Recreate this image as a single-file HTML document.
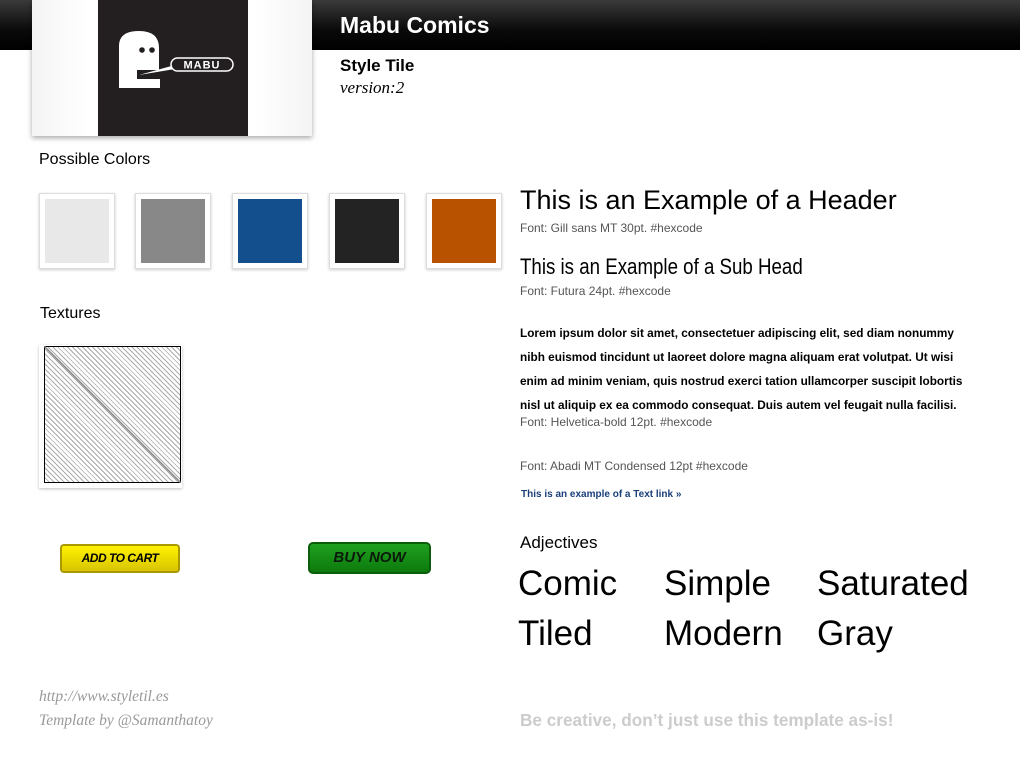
<!DOCTYPE html>
<html><head><style>
*{margin:0;padding:0;box-sizing:border-box}
body{width:1020px;height:760px;background:#fff;position:relative;overflow:hidden;font-family:"Liberation Sans",sans-serif;color:#000}
.a{position:absolute}
.bar{left:0;top:0;width:1020px;height:50px;background:linear-gradient(#3a3a3a,#0a0a0a 60%,#000)}
.card{left:32px;top:0;width:280px;height:136px;background:linear-gradient(90deg,#f4f4f4,#fff 20%,#fff 80%,#f4f4f4);box-shadow:0 2px 5px rgba(0,0,0,.35)}
.dark{left:98px;top:0;width:150px;height:136px;background:#231f20}
.sw{width:76px;height:76px;background:#fff;border:1px solid #ddd;box-shadow:0 1px 3px rgba(0,0,0,.2);top:193px}
.sw div{position:absolute;left:5px;top:5px;width:64px;height:64px}
.small{font-size:12px;color:#555}
.adj{font-size:35px}
</style></head><body>
<div class="a bar"></div>
<div class="a card"></div>
<div class="a dark"></div>
<svg class="a" style="left:117px;top:30px" width="118" height="60" viewBox="0 0 118 60">
<path d="M2 58 V16 Q2 1 22 1 Q42 1 42 18 V40 H20 V49 H43 V58 Z" fill="#fff"/>
<circle cx="25" cy="20" r="2.8" fill="#231f20"/><circle cx="35" cy="20" r="2.8" fill="#231f20"/>
<path d="M22 45 L58 35 L58 39 Z" fill="#fff"/>
<rect x="54" y="28" width="62" height="13" rx="6.5" fill="#231f20" stroke="#fff" stroke-width="1.5"/>
<text x="85" y="38.5" font-size="11" font-weight="bold" fill="#fff" text-anchor="middle" font-family="Liberation Sans" letter-spacing="1">MABU</text>
</svg>
<div class="a" style="left:340px;top:12px;font-size:23px;font-weight:bold;color:#fff">Mabu Comics</div>
<div class="a" style="left:340px;top:56px;font-size:17px;font-weight:bold">Style Tile</div>
<div class="a" style="left:340px;top:78px;font-size:17px;font-style:italic;font-family:'Liberation Serif',serif">version:2</div>
<div class="a" style="left:39px;top:151px;font-size:16px">Possible Colors</div>
<div class="a sw" style="left:39px"><div style="background:#e8e8e8"></div></div>
<div class="a sw" style="left:135px"><div style="background:#888"></div></div>
<div class="a sw" style="left:232px"><div style="background:#124f8c"></div></div>
<div class="a sw" style="left:329px"><div style="background:#232323"></div></div>
<div class="a sw" style="left:426px"><div style="background:#b95200"></div></div>
<div class="a" style="left:40px;top:305px;font-size:16px">Textures</div>
<div class="a" style="left:39px;top:345px;width:143px;height:143px;box-shadow:0 1px 3px rgba(0,0,0,.25);background:#fff"></div>
<div class="a" style="left:44px;top:346px;width:137px;height:137px;border:1px solid #000;background:repeating-linear-gradient(45deg,#fff 0 2.5px,#aaa 2.5px 3.5px)"></div>
<svg class="a" style="left:44px;top:346px" width="137" height="137"><line x1="0" y1="0" x2="137" y2="137" stroke="#888" stroke-width="1.5"/></svg>
<div class="a" style="left:60px;top:544px;width:120px;height:29px;border:2px solid #a89a00;border-radius:4px;background:linear-gradient(#fff200,#d9c400);font:italic bold 12px 'Liberation Sans',sans-serif;text-align:center;line-height:25px;letter-spacing:-.5px">ADD TO CART</div>
<div class="a" style="left:308px;top:542px;width:123px;height:32px;border:2px solid #0b5d0b;border-radius:5px;background:linear-gradient(#1fa01f,#0d7a0d);font:italic bold 15px 'Liberation Sans',sans-serif;text-align:center;line-height:28px;color:#0b1a0b">BUY NOW</div>
<div class="a" style="left:520px;top:185px;font-size:27px">This is an Example of a Header</div>
<div class="a small" style="left:520px;top:221px">Font: Gill sans MT 30pt. #hexcode</div>
<div class="a" style="left:520px;top:254px;font-size:22px;transform:scaleX(.85);transform-origin:left">This is an Example of a Sub Head</div>
<div class="a small" style="left:520px;top:284px">Font: Futura 24pt. #hexcode</div>
<div class="a" style="left:520px;top:321px;width:455px;font-size:11.8px;font-weight:bold;line-height:24px">Lorem ipsum dolor sit amet, consectetuer adipiscing elit, sed diam nonummy nibh euismod tincidunt ut laoreet dolore magna aliquam erat volutpat. Ut wisi enim ad minim veniam, quis nostrud exerci tation ullamcorper suscipit lobortis nisl ut aliquip ex ea commodo consequat. Duis autem vel feugait nulla facilisi.</div>
<div class="a small" style="left:520px;top:415px">Font: Helvetica-bold 12pt. #hexcode</div>
<div class="a small" style="left:520px;top:459px">Font: Abadi MT Condensed 12pt #hexcode</div>
<div class="a" style="left:521px;top:489px;font-size:10px;font-weight:bold;color:#1a3f7a">This is an example of a Text link »</div>
<div class="a" style="left:520px;top:533px;font-size:17px">Adjectives</div>
<div class="a adj" style="left:518px;top:564px">Comic</div>
<div class="a adj" style="left:664px;top:564px">Simple</div>
<div class="a adj" style="left:817px;top:564px">Saturated</div>
<div class="a adj" style="left:518px;top:614px">Tiled</div>
<div class="a adj" style="left:664px;top:614px">Modern</div>
<div class="a adj" style="left:817px;top:614px">Gray</div>
<div class="a" style="left:39px;top:688px;font:italic 15.5px 'Liberation Serif',serif;color:#999">http://www.styletil.es</div>
<div class="a" style="left:39px;top:712px;font:italic 15.5px 'Liberation Serif',serif;color:#999">Template by @Samanthatoy</div>
<div class="a" style="left:520px;top:710px;font-size:17.2px;font-weight:bold;color:#ccc">Be creative, don’t just use this template as-is!</div>
</body></html>
